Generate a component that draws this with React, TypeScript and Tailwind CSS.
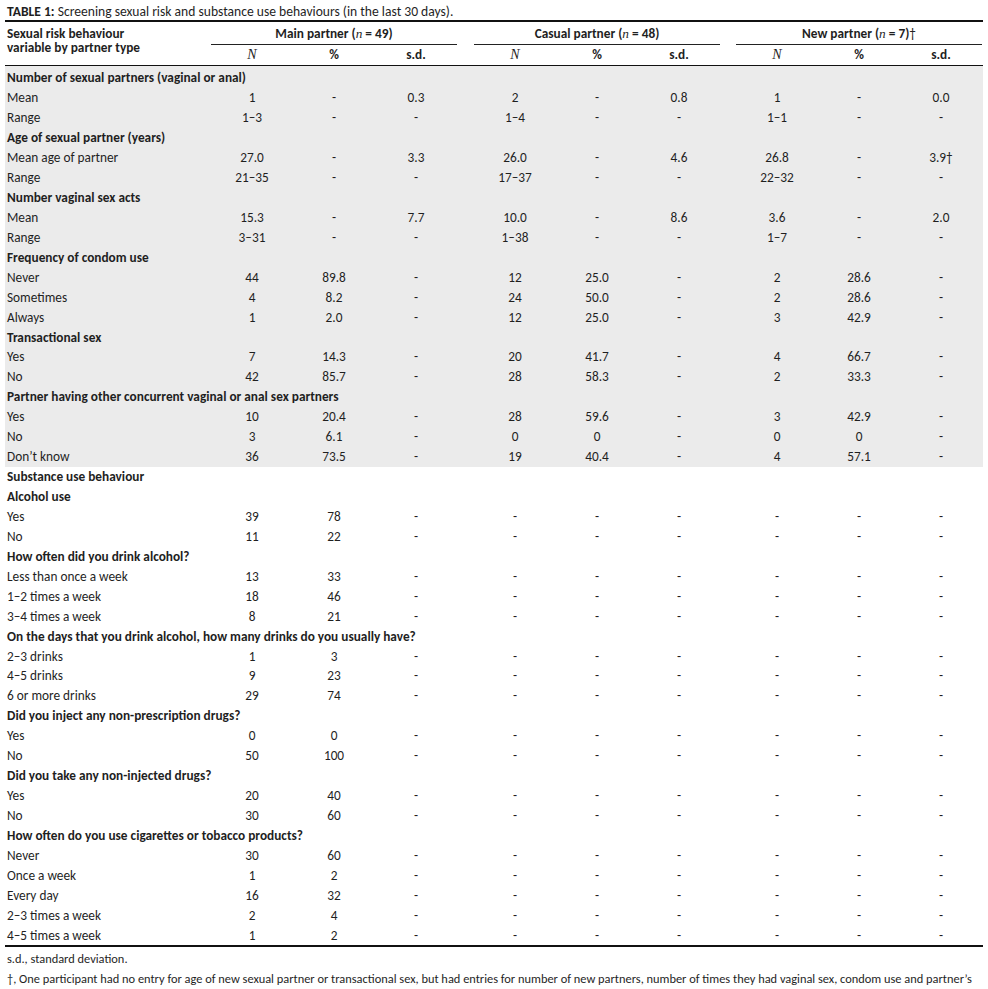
type Vals = [string, string, string];
type Row =
  | { kind: "head"; label: string }
  | { kind: "data"; label: string; main: Vals; casual: Vals; fresh: Vals };

const D: Vals = ["-", "-", "-"];

const h = (label: string): Row => ({ kind: "head", label });
const r = (label: string, main: Vals, casual: Vals = D, fresh: Vals = D): Row => ({
  kind: "data",
  label,
  main,
  casual,
  fresh,
});

const sexualRows: Row[] = [
  h("Number of sexual partners (vaginal or anal)"),
  r("Mean", ["1", "-", "0.3"], ["2", "-", "0.8"], ["1", "-", "0.0"]),
  r("Range", ["1–3", "-", "-"], ["1–4", "-", "-"], ["1–1", "-", "-"]),
  h("Age of sexual partner (years)"),
  r("Mean age of partner", ["27.0", "-", "3.3"], ["26.0", "-", "4.6"], ["26.8", "-", "3.9†"]),
  r("Range", ["21–35", "-", "-"], ["17–37", "-", "-"], ["22–32", "-", "-"]),
  h("Number vaginal sex acts"),
  r("Mean", ["15.3", "-", "7.7"], ["10.0", "-", "8.6"], ["3.6", "-", "2.0"]),
  r("Range", ["3–31", "-", "-"], ["1–38", "-", "-"], ["1–7", "-", "-"]),
  h("Frequency of condom use"),
  r("Never", ["44", "89.8", "-"], ["12", "25.0", "-"], ["2", "28.6", "-"]),
  r("Sometimes", ["4", "8.2", "-"], ["24", "50.0", "-"], ["2", "28.6", "-"]),
  r("Always", ["1", "2.0", "-"], ["12", "25.0", "-"], ["3", "42.9", "-"]),
  h("Transactional sex"),
  r("Yes", ["7", "14.3", "-"], ["20", "41.7", "-"], ["4", "66.7", "-"]),
  r("No", ["42", "85.7", "-"], ["28", "58.3", "-"], ["2", "33.3", "-"]),
  h("Partner having other concurrent vaginal or anal sex partners"),
  r("Yes", ["10", "20.4", "-"], ["28", "59.6", "-"], ["3", "42.9", "-"]),
  r("No", ["3", "6.1", "-"], ["0", "0", "-"], ["0", "0", "-"]),
  r("Don’t know", ["36", "73.5", "-"], ["19", "40.4", "-"], ["4", "57.1", "-"]),
];

const substanceRows: Row[] = [
  h("Substance use behaviour"),
  h("Alcohol use"),
  r("Yes", ["39", "78", "-"]),
  r("No", ["11", "22", "-"]),
  h("How often did you drink alcohol?"),
  r("Less than once a week", ["13", "33", "-"]),
  r("1–2 times a week", ["18", "46", "-"]),
  r("3–4 times a week", ["8", "21", "-"]),
  h("On the days that you drink alcohol, how many drinks do you usually have?"),
  r("2–3 drinks", ["1", "3", "-"]),
  r("4–5 drinks", ["9", "23", "-"]),
  r("6 or more drinks", ["29", "74", "-"]),
  h("Did you inject any non-prescription drugs?"),
  r("Yes", ["0", "0", "-"]),
  r("No", ["50", "100", "-"]),
  h("Did you take any non-injected drugs?"),
  r("Yes", ["20", "40", "-"]),
  r("No", ["30", "60", "-"]),
  h("How often do you use cigarettes or tobacco products?"),
  r("Never", ["30", "60", "-"]),
  r("Once a week", ["1", "2", "-"]),
  r("Every day", ["16", "32", "-"]),
  r("2–3 times a week", ["2", "4", "-"]),
  r("4–5 times a week", ["1", "2", "-"]),
];

const Group = ({ vals, className = "" }: { vals: Vals; className?: string }) => (
  <div className={`grid w-[246px] grid-cols-3 text-center ${className}`}>
    {vals.map((v, i) => (
      <span key={i}>{v}</span>
    ))}
  </div>
);

const TableRow = ({ row }: { row: Row }) => {
  if (row.kind === "head") {
    return (
      <div className="flex h-[19.95px] items-center pl-[2px] font-bold whitespace-nowrap">{row.label}</div>
    );
  }
  return (
    <div className="flex h-[19.95px] items-center">
      <div className="w-[206px] pl-[2px]">{row.label}</div>
      <Group vals={row.main} />
      <Group vals={row.casual} className="ml-[17px]" />
      <Group vals={row.fresh} className="ml-[16px]" />
    </div>
  );
};

const GroupHead = ({ title, n, dagger, className = "" }: { title: string; n: string; dagger?: boolean; className?: string }) => (
  <div className={`w-[246px] ${className}`}>
    <div className="flex h-[22px] items-center justify-center border-b border-[#222] font-bold">
      {title}&nbsp;(<i className="font-['Liberation_Serif',serif] font-normal">n</i>&nbsp;= {n}){dagger && <span className="font-normal">†</span>}
    </div>
    <div className="grid h-5 grid-cols-3 items-center text-center font-bold">
      <i className="font-['Liberation_Serif',serif] text-[14px] font-normal">N</i>
      <span>%</span>
      <span>s.d.</span>
    </div>
  </div>
);

export default function App() {
  return (
    <div className="min-h-screen bg-white px-[5px] pt-[4px] font-['Carlito','Liberation_Sans',sans-serif] text-[13.3px] leading-none text-[#1f1f1f]">
      <div className="w-[978px]">
        <p className="pl-[2px] text-[13.6px] leading-[16px]">
          <b>TABLE 1:</b> Screening sexual risk and substance use behaviours (in the last 30 days).
        </p>
        <div className="border-t-2 border-[#111]">
          <div className="flex border-b border-[#111] pt-[1px]">
            <div className="flex w-[206px] flex-col pl-[2px] pt-[4px] font-bold">
              <span className="h-[14px]">Sexual risk behaviour</span>
              <span className="h-[14px]">variable by partner type</span>
            </div>
            <GroupHead title="Main partner" n="49" />
            <GroupHead title="Casual partner" n="48" className="ml-[17px]" />
            <GroupHead title="New partner" n="7" dagger className="ml-[16px]" />
          </div>
          <div className="bg-[#ebebeb] pt-[2px]">
            {sexualRows.map((row, i) => (
              <TableRow key={i} row={row} />
            ))}
          </div>
          <div className="border-b-2 border-[#111]">
            {substanceRows.map((row, i) => (
              <TableRow key={i} row={row} />
            ))}
          </div>
        </div>
        <div className="pl-[2px] pt-[5px] text-[12.4px] leading-[14px]">
          <p>s.d., standard deviation.</p>
          <p className="mt-[6px]">
            †, One participant had no entry for age of new sexual partner or transactional sex, but had entries for number of new partners, number of times they had vaginal sex, condom use and partner’s concurrent partners.
          </p>
        </div>
      </div>
    </div>
  );
}
